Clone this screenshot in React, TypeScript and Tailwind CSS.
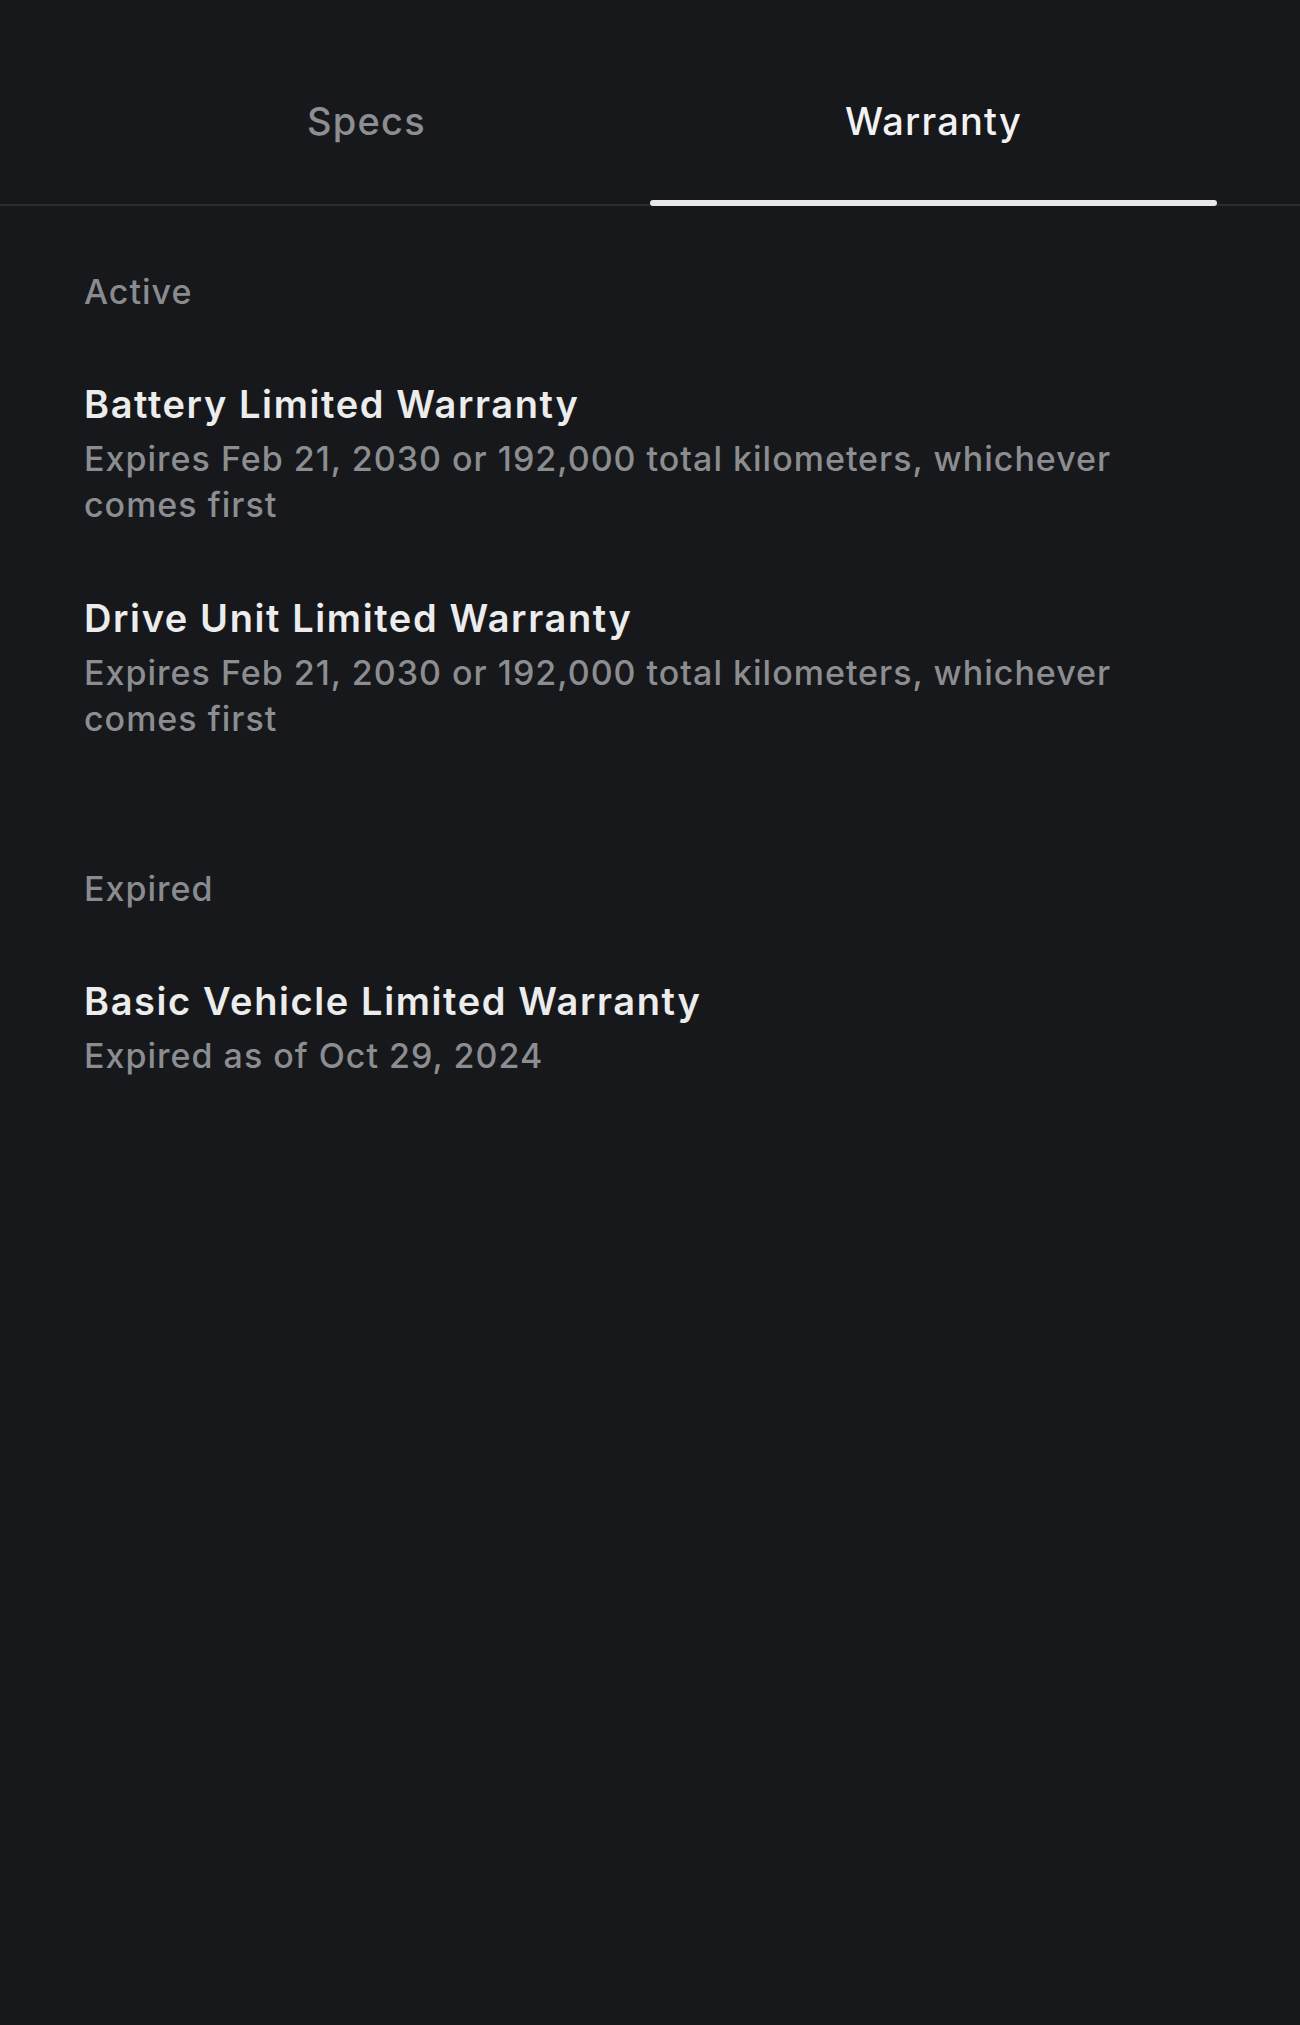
import React, { useState } from 'react';

interface WarrantyItem {
  title: string;
  detail: string;
}

const activeWarranties: WarrantyItem[] = [
  {
    title: 'Battery Limited Warranty',
    detail: 'Expires Feb 21, 2030 or 192,000 total kilometers, whichever comes first',
  },
  {
    title: 'Drive Unit Limited Warranty',
    detail: 'Expires Feb 21, 2030 or 192,000 total kilometers, whichever comes first',
  },
];

const expiredWarranties: WarrantyItem[] = [
  {
    title: 'Basic Vehicle Limited Warranty',
    detail: 'Expired as of Oct 29, 2024',
  },
];

const WarrantyRow: React.FC<{ item: WarrantyItem }> = ({ item }) => (
  <div className="flex flex-col gap-[9px]">
    <div className="text-[38px] leading-[46px] font-semibold tracking-[1.6px] text-[#ececec]">
      {item.title}
    </div>
    <div className="w-[1080px] text-[34px] leading-[46px] font-medium tracking-[1px] text-[#8c8d90]">
      {item.detail}
    </div>
  </div>
);

const App: React.FC = () => {
  const [tab, setTab] = useState<'specs' | 'warranty'>('warranty');

  return (
    <div
      className="min-h-screen bg-[#17181b] antialiased"
      style={{ fontFamily: 'Inter, "Noto Sans", sans-serif' }}
    >
      {/* Tabs */}
      <div className="border-b-2 border-[#2a2b2e]">
        <div className="grid grid-cols-2 px-[83px]">
          {(['specs', 'warranty'] as const).map((key) => (
            <button
              key={key}
              onClick={() => setTab(key)}
              className="flex flex-col items-center -mb-[2px]"
            >
              <span
                className={`pt-[101px] pb-[59px] text-[38px] leading-[40px] font-medium tracking-[1.2px] ${
                  tab === key ? 'text-[#f2f2f2]' : 'text-[#8d8e91]'
                }`}
              >
                {key === 'specs' ? 'Specs' : 'Warranty'}
              </span>
              <span
                className={`h-[6px] w-full rounded-full ${
                  tab === key ? 'bg-[#e8e8e8]' : 'bg-transparent'
                }`}
              />
            </button>
          ))}
        </div>
      </div>

      {/* Content */}
      <div className="px-[84px] pt-[66px]">
        <section>
          <div className="mb-[69px] text-[34px] leading-[40px] font-medium tracking-[1px] text-[#8a8b8e]">
            Active
          </div>
          <div className="flex flex-col gap-[67px]">
            {activeWarranties.map((item) => (
              <WarrantyRow key={item.title} item={item} />
            ))}
          </div>
        </section>

        <section className="mt-[127px]">
          <div className="mb-[69px] text-[34px] leading-[40px] font-medium tracking-[1px] text-[#8a8b8e]">
            Expired
          </div>
          <div className="flex flex-col gap-[67px]">
            {expiredWarranties.map((item) => (
              <WarrantyRow key={item.title} item={item} />
            ))}
          </div>
        </section>
      </div>
    </div>
  );
};

export default App;
